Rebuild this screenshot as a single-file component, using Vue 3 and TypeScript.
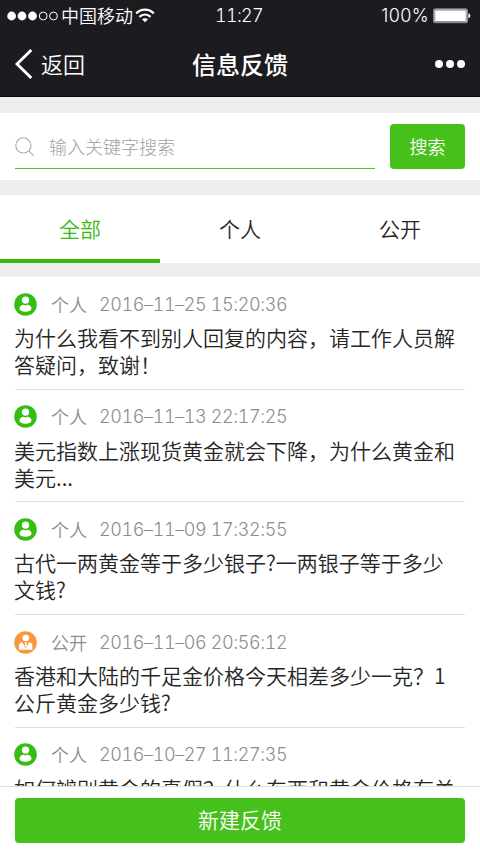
<script setup lang="ts">
import { ref } from 'vue'

interface Feedback {
  kind: 'personal' | 'public'
  time: string
  lines: string[]
}

const tabs: string[] = ['全部', '个人', '公开']
const activeTab = ref(0)
const keyword = ref('')

const items: Feedback[] = [
  { kind: 'personal', time: '2016–11–25 15:20:36', lines: ['为什么我看不到别人回复的内容，请工作人员解', '答疑问，致谢！'] },
  { kind: 'personal', time: '2016–11–13 22:17:25', lines: ['美元指数上涨现货黄金就会下降，为什么黄金和', '美元...'] },
  { kind: 'personal', time: '2016–11–09 17:32:55', lines: ['古代一两黄金等于多少银子?一两银子等于多少', '文钱?'] },
  { kind: 'public', time: '2016–11–06 20:56:12', lines: ['香港和大陆的千足金价格今天相差多少一克？1', '公斤黄金多少钱?'] },
  { kind: 'personal', time: '2016–10–27 11:27:35', lines: ['如何辨别黄金的真假？什么东西和黄金价格有关'] },
]
</script>

<template>
  <div class="screen">
    <header class="top">
      <div class="status">
        <div class="carrier">
          <svg class="signal" width="52" height="10" viewBox="0 0 52 10">
            <circle cx="4.6" cy="5" r="4.4" fill="#fff" />
            <circle cx="15" cy="5" r="4.4" fill="#fff" />
            <circle cx="25.5" cy="5" r="4.4" fill="#fff" />
            <circle cx="36.2" cy="5" r="3.9" fill="none" stroke="#fff" stroke-width="1" />
            <circle cx="46.5" cy="5" r="3.9" fill="none" stroke="#fff" stroke-width="1" />
          </svg>
          <span class="operator">中国移动</span>
          <svg class="wifi" width="20" height="15" viewBox="0 0 20 15">
            <g fill="none" stroke="#fff" stroke-width="2.3">
              <path d="M1.2 5.4 C6.3 .4 13.7 .4 18.8 5.4" />
              <path d="M4.4 8.8 C7.7 5.8 12.3 5.8 15.6 8.8" />
            </g>
            <path d="M7 11.3 C8.7 9.8 11.3 9.8 13 11.3 L10 14.3Z" fill="#fff" />
          </svg>
        </div>
        <span class="clock">11:27</span>
        <div class="power">
          <span class="percent">100%</span>
          <svg width="38" height="16" viewBox="0 0 38 16">
            <rect x=".6" y=".9" width="33.8" height="13.8" rx="2" fill="#fff" stroke="#85858a" stroke-width="1.2" />
            <rect x="1.8" y="2.1" width="31.4" height="11.4" rx="1" fill="#fff" stroke="#333" stroke-width=".5" />
            <path d="M35.4 5.3 Q37.4 5.6 37.4 7.8 Q37.4 10 35.4 10.3Z" fill="#eee" />
          </svg>
        </div>
      </div>
      <nav class="nav">
        <div class="back">
          <svg width="18" height="30" viewBox="0 0 18 30">
            <path d="M16.3 1 L2 15 L16.3 29" fill="none" stroke="#fff" stroke-width="2.9" />
          </svg>
          <span>返回</span>
        </div>
        <h1>信息反馈</h1>
        <div class="more"><i /><i /><i /></div>
      </nav>
    </header>

    <section class="search">
      <label class="field">
        <svg class="lens" width="20" height="20" viewBox="0 0 20 20">
          <g fill="none" stroke="#aaa" stroke-width="1.1">
            <circle cx="8.4" cy="8.4" r="7.6" />
            <path d="M13.8 13.8 L18.6 18.6" />
          </g>
        </svg>
        <input v-model="keyword" type="text" placeholder="输入关键字搜索" />
      </label>
      <button class="go">搜索</button>
    </section>

    <section class="tabs">
      <button
        v-for="(tab, i) in tabs"
        :key="tab"
        :class="['tab', { active: i === activeTab }]"
        @click="activeTab = i"
      >{{ tab }}</button>
    </section>

    <main class="list">
      <article v-for="item in items" :key="item.time" class="item">
        <div class="meta">
          <svg v-if="item.kind === 'personal'" class="avatar" width="23" height="23" viewBox="0 0 23 23">
            <circle cx="11.5" cy="11.5" r="11.3" fill="#35bd11" />
            <circle cx="11.5" cy="7.1" r="3.7" fill="#fff" />
            <path d="M5.5 15.6 C5.5 12.9 8 11.8 9.5 11.7 Q11.5 12.9 13.5 11.7 C15 11.8 17.5 12.9 17.5 15.6 C17.5 18 14.6 18.8 11.5 18.8 C8.4 18.8 5.5 18 5.5 15.6Z" fill="#fff" />
          </svg>
          <svg v-else class="avatar" width="23" height="23" viewBox="0 0 23 23">
            <circle cx="11.5" cy="11.5" r="11.3" fill="#f9983a" />
            <circle cx="11.8" cy="7" r="3.3" fill="#fff" />
            <path d="M5 18.7 V14.2 Q5 11.8 8.3 11.2 L11.7 17.2 L15.1 11.2 Q18.4 11.8 18.4 14.2 V18.7Z" fill="#fff" />
            <path d="M10.7 11 H12.8 L12.3 12.4 L12.7 14.6 L11.7 16 L10.8 14.6 L11.2 12.4Z" fill="#fff" />
          </svg>
          <span class="kind">{{ item.kind === 'personal' ? '个人' : '公开' }}</span>
          <time>{{ item.time }}</time>
        </div>
        <p><span v-for="line in item.lines" :key="line">{{ line }}</span></p>
      </article>
    </main>

    <footer class="bottom">
      <button class="create">新建反馈</button>
    </footer>
  </div>
</template>

<style>
body {
  margin: 0;
  overflow: hidden;
}
</style>

<style scoped>
.screen {
  width: 480px;
  height: 854px;
  display: flex;
  flex-direction: column;
  overflow: hidden;
  background: #fff;
  color: #262626;
  font-family: "Noto Sans CJK SC", sans-serif;
  font-weight: 350;
}
button {
  border: 0;
  padding: 0;
  font: inherit;
  color: inherit;
  background: none;
}
.top {
  flex: none;
  height: 97px;
  box-sizing: border-box;
  background: #1c1b20;
  border-bottom: 1px solid #08080a;
  color: #fff;
}
.status {
  height: 31px;
  display: grid;
  grid-template-columns: 1fr auto 1fr;
  align-items: center;
  padding: 0 9px 0 7px;
}
.carrier {
  display: flex;
  align-items: center;
}
.operator {
  margin-left: 2px;
  padding-bottom: 2px;
  font-size: 18px;
  line-height: 28px;
}
.wifi {
  margin-left: 2px;
}
.clock {
  font-family: Inter, "Liberation Sans", sans-serif;
  font-size: 18px;
  font-weight: 350;
  font-variant-numeric: tabular-nums;
  letter-spacing: -0.7px;
}
.power {
  display: flex;
  justify-content: flex-end;
  align-items: center;
  gap: 4px;
}
.percent {
  font-family: Inter, "Liberation Sans", sans-serif;
  font-size: 18px;
  font-weight: 350;
  letter-spacing: 0.4px;
}
.nav {
  height: 65px;
  display: grid;
  grid-template-columns: 1fr auto 1fr;
  align-items: center;
  padding: 0 15px;
}
.back {
  display: flex;
  align-items: center;
  gap: 8px;
  font-size: 22px;
  line-height: 28px;
}
.back span {
  padding-bottom: 2px;
}
h1 {
  margin: 0;
  font-size: 24px;
  line-height: 34px;
  font-weight: 500;
}
.more {
  display: flex;
  justify-content: flex-end;
  gap: 3px;
}
.more i {
  width: 8px;
  height: 8px;
  border-radius: 50%;
  background: #fff;
}
.search {
  flex: none;
  display: flex;
  justify-content: space-between;
  padding: 11px 15px;
  border-top: 16px solid #ededed;
}
.field {
  width: 360px;
  height: 45px;
  box-sizing: border-box;
  display: flex;
  align-items: center;
  gap: 14px;
  border-bottom: 1px solid #4dc427;
}
.lens {
  margin-top: 2px;
}
.field input {
  flex: 1;
  min-width: 0;
  height: 30px;
  padding: 0;
  border: 0;
  outline: 0;
  font: inherit;
  font-weight: 300;
  font-size: 18px;
  background: none;
}
.field input::placeholder {
  color: #a0a0a0;
  opacity: 1;
}
.go {
  width: 75px;
  height: 45px;
  padding-bottom: 2px;
  border-radius: 4px;
  background: #46c11b;
  color: #fff;
  font-size: 18px;
}
.tabs {
  flex: none;
  height: 68px;
  display: grid;
  grid-template-columns: repeat(3, 1fr);
  border-top: 15px solid #ededed;
  border-bottom: 14px solid #ededed;
}
.tab {
  border-bottom: 4px solid transparent;
  font-size: 21px;
  line-height: 30px;
  padding-top: 1px;
}
.tab.active {
  color: #38b80e;
  border-color: #38b80e;
}
.list {
  flex: 1;
  min-height: 0;
  overflow: hidden;
  padding: 0 15px;
}
.item {
  height: 112.7px;
  box-sizing: border-box;
  padding-top: 15px;
  border-bottom: 1px solid #dedede;
}
.meta {
  height: 24px;
  display: flex;
  align-items: center;
  margin-left: -1px;
  color: #8c8c8c;
  font-size: 18px;
  font-weight: 300;
}
.kind {
  margin-left: 14px;
  width: 48px;
  line-height: 24px;
  padding-bottom: 1px;
  font-weight: 350;
}
time {
  font-family: Inter, "Liberation Sans", sans-serif;
  font-size: 18px;
  font-variant-numeric: tabular-nums;
  letter-spacing: -0.38px;
  white-space: nowrap;
}
p {
  margin: 8px 0 0 -1px;
  font-size: 21px;
  line-height: 27px;
}
p span {
  display: block;
  white-space: nowrap;
}
.bottom {
  flex: none;
  height: 68px;
  box-sizing: border-box;
  padding: 11px 15px 0;
  border-top: 1px solid #dedede;
  background: #fff;
}
.create {
  display: block;
  width: 100%;
  height: 45px;
  padding-bottom: 4px;
  border-radius: 4px;
  background: #46c11b;
  color: #fff;
  font-size: 21px;
}
</style>
